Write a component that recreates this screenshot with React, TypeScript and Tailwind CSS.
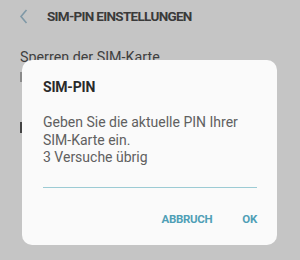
import React from "react";

export default function App() {
  return (
    <div className="relative w-[300px] h-[260px] overflow-hidden bg-[#c5c5c5]" style={{ fontFamily: "Roboto, 'Noto Sans', sans-serif" }}>
      {/* header */}
      <div className="flex items-center h-[32px] pl-[19px]">
        <svg width="9" height="15" viewBox="0 0 9 15" className="mt-[1px]">
          <path d="M7.5 1 L2 7.5 L7.5 14" fill="none" stroke="#7f98a6" strokeWidth="1.6" />
        </svg>
        <span className="ml-[19px] text-[13.5px] font-bold text-[#3a3a3a] tracking-[-0.7px]">SIM-PIN EINSTELLUNGEN</span>
      </div>
      <div className="pl-[20px] pt-[16px] text-[14.3px] text-[#3f3f3f] leading-[18px]">Sperren der SIM-Karte</div>
      <div className="pl-[20px] mt-[6px] flex flex-col gap-[40px]">
        <div className="w-[2px] h-[10px] bg-[#8a8a8a]" />
        <div className="w-[2px] h-[11px] bg-[#444]" />
      </div>

      {/* dialog */}
      <div className="absolute left-[22px] top-[60px] w-[255px] h-[185px] bg-[#fafafa] rounded-[10px] pl-[21px] pr-[20px] pt-[17px]">
        <div className="text-[14px] font-bold text-[#2a2a2a] tracking-[-0.2px] leading-[20px]">SIM-PIN</div>
        <div className="mt-[17px] text-[14px] text-[#606060] leading-[17.5px]">
          <div>Geben Sie die aktuelle PIN Ihrer</div>
          <div>SIM-Karte ein.</div>
          <div>3 Versuche übrig</div>
        </div>
        <div className="mt-[20px] h-[1.5px] bg-[#9ccbd4]" />
        <div className="flex justify-end items-center gap-[30px] mt-[23px] text-[11.5px] font-bold text-[#4f9fb6] tracking-[-0.3px]">
          <span>ABBRUCH</span>
          <span>OK</span>
        </div>
      </div>
    </div>
  );
}
